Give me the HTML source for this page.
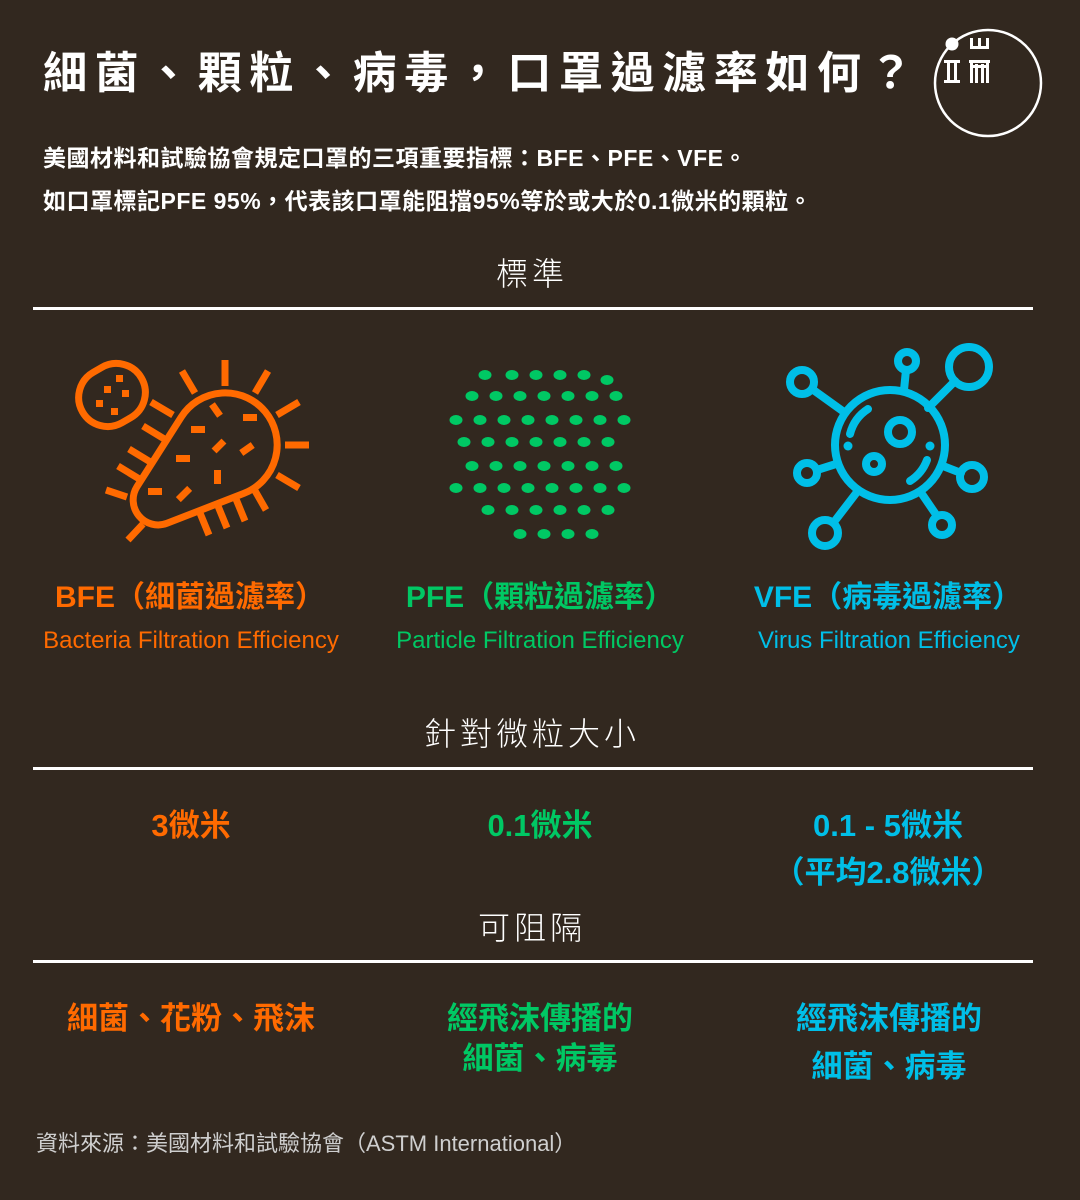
<!DOCTYPE html>
<html><head><meta charset="utf-8"><style>
*{margin:0;padding:0;box-sizing:border-box}
body{width:1080px;height:1200px;background:#32281f;position:relative;overflow:hidden;font-family:"Liberation Sans","Noto Sans CJK TC",sans-serif;color:#fff}
.a{position:absolute;white-space:nowrap}
.c{text-align:center;transform:translateX(-50%)}
.hr{position:absolute;left:33px;width:1000px;height:3px;background:#fff}
.h{font-size:32px;font-weight:300;letter-spacing:4px;line-height:1}
.o{color:#ff6a00}.g{color:#00c864}.b{color:#00bfe8}
.lab{font-size:30px;font-weight:bold;line-height:1}
.en{font-size:24px;line-height:1}
.v{font-size:31px;font-weight:bold;line-height:1}
</style></head><body>
<div class="a" style="left:43px;top:52px;font-size:44px;font-weight:bold;letter-spacing:7.6px;line-height:1">細菌、顆粒、病毒，口罩過濾率如何？</div>
<div class="a" style="left:43px;top:147px;font-size:23px;font-weight:bold;line-height:1;letter-spacing:0.5px">美國材料和試驗協會規定口罩的三項重要指標：BFE、PFE、VFE。</div>
<div class="a" style="left:43px;top:190px;font-size:23px;font-weight:bold;line-height:1;letter-spacing:0.5px">如口罩標記PFE 95%，代表該口罩能阻擋95%等於或大於0.1微米的顆粒。</div>
<svg class="a" style="left:930px;top:28px" width="115" height="115" viewBox="0 0 115 115">
<circle cx="58" cy="55" r="53" fill="none" stroke="#fff" stroke-width="2.5"/>
<circle cx="22" cy="16" r="6.5" fill="#fff"/>
<g fill="#fff">
<rect x="14" y="32" width="16" height="3"/><rect x="14" y="52" width="16" height="3"/><rect x="17" y="32" width="3" height="23"/><rect x="24" y="32" width="3" height="23"/>
<rect x="40" y="10" width="3" height="10"/><rect x="48" y="10" width="3" height="10"/><rect x="56" y="10" width="3" height="10"/><rect x="40" y="18" width="19" height="3"/>
<rect x="39" y="32" width="21" height="3"/><rect x="40" y="32" width="3" height="23"/><rect x="56" y="32" width="3" height="23"/><rect x="45" y="36" width="3" height="19"/><rect x="51" y="36" width="3" height="19"/><rect x="43" y="37" width="13" height="3"/></g></svg>

<div class="a c h" style="left:532px;top:258px">標準</div>
<div class="hr" style="top:307px"></div>

<svg class="a" style="left:60px;top:345px" width="260" height="205" viewBox="60 345 260 205">
<g fill="none" stroke="#ff6a00" stroke-width="7">
<rect x="-34" y="-29" width="68" height="58" rx="29" transform="translate(112,395) rotate(-30)"/>
<path d="M181.2 417.1 A52 52 0 1 1 243.8 493.4 L167 523.3 A25 25 0 0 1 137 486.6 Z"/>
<g transform="translate(225,445)">
<path d="M0 -59V-85M30 -52L43 -74M52 -30L74 -43M60 0H84M52 30L74 43M-30 -52L-43 -74M-52 -30L-74 -43" transform="rotate(0)"/>
</g>
<path d="M166 440L143 426M152 463L129 449M141 480L118 466M127 497L106 490"/>
<path d="M200 513L209 535M218 506L227 528M236 499L245 521M254 489L266 510M143 524L128 540"/>
</g>
<g fill="#ff6a00">
<rect x="116" y="375" width="7" height="7"/><rect x="104" y="386" width="7" height="7"/><rect x="122" y="390" width="7" height="7"/><rect x="96" y="400" width="7" height="7"/><rect x="111" y="408" width="7" height="7"/>
<rect x="191" y="426" width="14" height="7"/><rect x="243" y="414" width="14" height="7"/><rect x="176" y="455" width="14" height="7"/><rect x="148" y="488" width="14" height="7"/><rect x="214" y="470" width="7" height="14"/>
<rect x="-7" y="-3.5" width="14" height="7" transform="translate(216,410) rotate(55)"/>
<rect x="-7" y="-3.5" width="14" height="7" transform="translate(219,446) rotate(-45)"/>
<rect x="-7" y="-3.5" width="14" height="7" transform="translate(247,449) rotate(-35)"/>
<rect x="-8" y="-3.5" width="16" height="7" transform="translate(184,494) rotate(-45)"/>
</g></svg>

<svg class="a" style="left:440px;top:360px" width="200" height="190" viewBox="440 360 200 190" fill="#00c864">
<ellipse cx="485" cy="375" rx="6.5" ry="5"/><ellipse cx="512" cy="375" rx="6.5" ry="5"/><ellipse cx="536" cy="375" rx="6.5" ry="5"/><ellipse cx="560" cy="375" rx="6.5" ry="5"/><ellipse cx="584" cy="375" rx="6.5" ry="5"/><ellipse cx="607" cy="380" rx="6.5" ry="5"/>
<ellipse cx="472" cy="396" rx="6.5" ry="5"/><ellipse cx="496" cy="396" rx="6.5" ry="5"/><ellipse cx="520" cy="396" rx="6.5" ry="5"/><ellipse cx="544" cy="396" rx="6.5" ry="5"/><ellipse cx="568" cy="396" rx="6.5" ry="5"/><ellipse cx="592" cy="396" rx="6.5" ry="5"/><ellipse cx="616" cy="396" rx="6.5" ry="5"/>
<ellipse cx="456" cy="420" rx="6.5" ry="5"/><ellipse cx="480" cy="420" rx="6.5" ry="5"/><ellipse cx="504" cy="420" rx="6.5" ry="5"/><ellipse cx="528" cy="420" rx="6.5" ry="5"/><ellipse cx="552" cy="420" rx="6.5" ry="5"/><ellipse cx="576" cy="420" rx="6.5" ry="5"/><ellipse cx="600" cy="420" rx="6.5" ry="5"/><ellipse cx="624" cy="420" rx="6.5" ry="5"/>
<ellipse cx="464" cy="442" rx="6.5" ry="5"/><ellipse cx="488" cy="442" rx="6.5" ry="5"/><ellipse cx="512" cy="442" rx="6.5" ry="5"/><ellipse cx="536" cy="442" rx="6.5" ry="5"/><ellipse cx="560" cy="442" rx="6.5" ry="5"/><ellipse cx="584" cy="442" rx="6.5" ry="5"/><ellipse cx="608" cy="442" rx="6.5" ry="5"/>
<ellipse cx="472" cy="466" rx="6.5" ry="5"/><ellipse cx="496" cy="466" rx="6.5" ry="5"/><ellipse cx="520" cy="466" rx="6.5" ry="5"/><ellipse cx="544" cy="466" rx="6.5" ry="5"/><ellipse cx="568" cy="466" rx="6.5" ry="5"/><ellipse cx="592" cy="466" rx="6.5" ry="5"/><ellipse cx="616" cy="466" rx="6.5" ry="5"/>
<ellipse cx="456" cy="488" rx="6.5" ry="5"/><ellipse cx="480" cy="488" rx="6.5" ry="5"/><ellipse cx="504" cy="488" rx="6.5" ry="5"/><ellipse cx="528" cy="488" rx="6.5" ry="5"/><ellipse cx="552" cy="488" rx="6.5" ry="5"/><ellipse cx="576" cy="488" rx="6.5" ry="5"/><ellipse cx="600" cy="488" rx="6.5" ry="5"/><ellipse cx="624" cy="488" rx="6.5" ry="5"/>
<ellipse cx="488" cy="510" rx="6.5" ry="5"/><ellipse cx="512" cy="510" rx="6.5" ry="5"/><ellipse cx="536" cy="510" rx="6.5" ry="5"/><ellipse cx="560" cy="510" rx="6.5" ry="5"/><ellipse cx="584" cy="510" rx="6.5" ry="5"/><ellipse cx="608" cy="510" rx="6.5" ry="5"/>
<ellipse cx="520" cy="534" rx="6.5" ry="5"/><ellipse cx="544" cy="534" rx="6.5" ry="5"/><ellipse cx="568" cy="534" rx="6.5" ry="5"/><ellipse cx="592" cy="534" rx="6.5" ry="5"/>
</svg>

<svg class="a" style="left:770px;top:340px" width="240" height="220" viewBox="770 340 240 220">
<g fill="none" stroke="#00bfe8" stroke-width="8" stroke-linecap="round">
<circle cx="890" cy="445" r="55"/>
<circle cx="802" cy="382" r="12"/><line x1="812" y1="389" x2="844" y2="412"/>
<circle cx="907" cy="361" r="9"/><line x1="906" y1="370" x2="904" y2="390"/>
<circle cx="969" cy="367" r="20"/><line x1="955" y1="381" x2="928" y2="408"/>
<circle cx="807" cy="473" r="10"/><line x1="817" y1="470" x2="836" y2="464"/>
<circle cx="972" cy="477" r="12"/><line x1="961" y1="473" x2="943" y2="466"/>
<circle cx="825" cy="533" r="13"/><line x1="834" y1="522" x2="857" y2="492"/>
<circle cx="942" cy="525" r="10"/><line x1="937" y1="516" x2="922" y2="494"/>
<circle cx="900" cy="432" r="12"/><circle cx="874" cy="464" r="8"/>
<path d="M868 409 A42 42 0 0 0 850 434"/><path d="M927 460 A42 42 0 0 1 910 481"/>
</g>
<g fill="#00bfe8"><circle cx="848" cy="446" r="4.5"/><circle cx="930" cy="446" r="4.5"/></g>
</svg>

<div class="a c lab o" style="left:190px;top:583px">BFE（細菌過濾率）</div>
<div class="a c lab g" style="left:540px;top:583px">PFE（顆粒過濾率）</div>
<div class="a c lab b" style="left:888px;top:583px">VFE（病毒過濾率）</div>
<div class="a c en o" style="left:191px;top:629px">Bacteria Filtration Efficiency</div>
<div class="a c en g" style="left:540px;top:629px">Particle Filtration Efficiency</div>
<div class="a c en b" style="left:889px;top:629px">Virus Filtration Efficiency</div>

<div class="a c h" style="left:532px;top:718px">針對微粒大小</div>
<div class="hr" style="top:767px"></div>
<div class="a c v o" style="left:191px;top:810px">3微米</div>
<div class="a c v g" style="left:540px;top:810px">0.1微米</div>
<div class="a c v b" style="left:888px;top:810px">0.1 - 5微米</div>
<div class="a c v b" style="left:888px;top:857px">（平均2.8微米）</div>

<div class="a c h" style="left:532px;top:912px">可阻隔</div>
<div class="hr" style="top:960px"></div>
<div class="a c v o" style="left:191px;top:1003px">細菌、花粉、飛沫</div>
<div class="a c v g" style="left:540px;top:1003px">經飛沫傳播的</div>
<div class="a c v g" style="left:540px;top:1043px">細菌、病毒</div>
<div class="a c v b" style="left:889px;top:1003px">經飛沫傳播的</div>
<div class="a c v b" style="left:889px;top:1051px">細菌、病毒</div>

<div class="a" style="left:36px;top:1133px;font-size:22px;color:#cfcfcf;line-height:1">資料來源：美國材料和試驗協會（ASTM International）</div>
</body></html>
